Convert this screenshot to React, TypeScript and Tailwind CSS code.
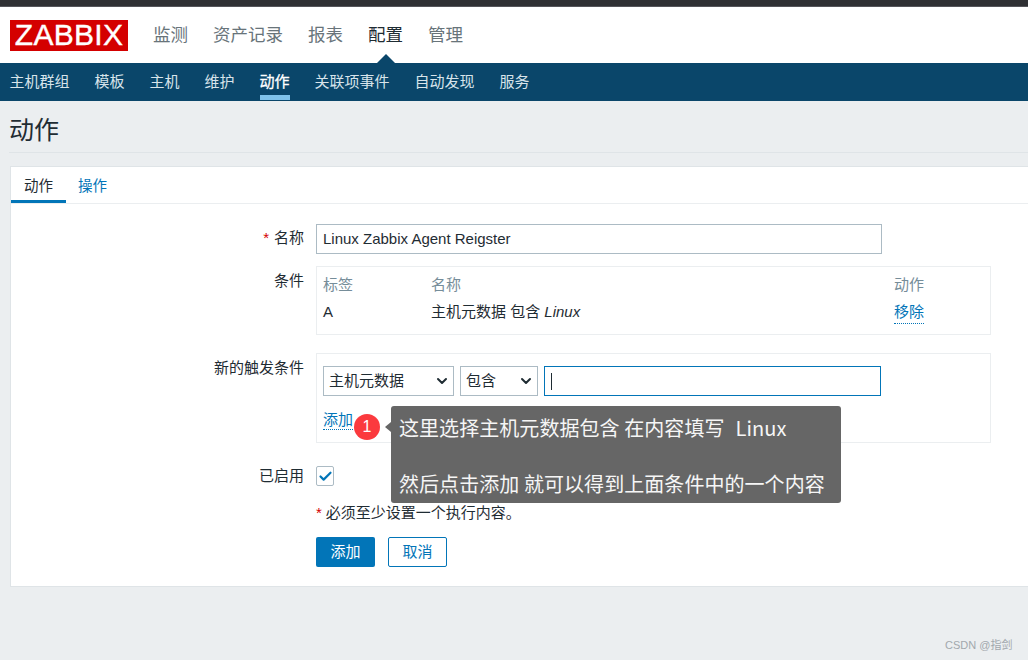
import type { ReactNode } from "react";
import { Check, ChevronDown } from "lucide-react";

const FONT = "font-['Liberation_Sans','Noto_Sans_CJK_SC',sans-serif]";

const mainMenu = [
  { label: "监测", active: false },
  { label: "资产记录", active: false },
  { label: "报表", active: false },
  { label: "配置", active: true },
  { label: "管理", active: false },
];

const subMenu = ["主机群组", "模板", "主机", "维护", "动作", "关联项事件", "自动发现", "服务"];

function Header() {
  return (
    <header className="flex h-[56px] items-center bg-white pl-[10px]">
      <div className="flex h-[31px] w-[118px] items-center justify-center bg-[#d40000] text-[30px] leading-none tracking-[0.3px] text-white [-webkit-text-stroke:0.4px_white]">
        ZABBIX
      </div>
      <nav className="ml-[25px] flex gap-[25px] pt-[1px] text-[17.5px]">
        {mainMenu.map((item) => (
          <a key={item.label} className={item.active ? "relative text-[#1f2c33]" : "text-[#68747a]"}>
            {item.label}
            {item.active && (
              <span className="absolute left-1/2 top-[32px] h-0 w-0 -translate-x-1/2 border-x-[9px] border-b-[9px] border-x-transparent border-b-[#0a466a]" />
            )}
          </a>
        ))}
      </nav>
    </header>
  );
}

function SubNav() {
  return (
    <nav className="flex h-[38px] gap-[25px] bg-[#0a466a] pl-[9.5px] text-[15px] text-[#d8e4eb]">
      {subMenu.map((item) => (
        <a
          key={item}
          className={
            item === "动作"
              ? "flex h-[37px] items-center border-b-[5px] border-[#7fc2ea] pt-[7px] text-white [-webkit-text-stroke:0.3px_white]"
              : "flex h-[37px] items-center pt-[2px]"
          }
        >
          {item}
        </a>
      ))}
    </nav>
  );
}

interface FormRowProps {
  label: string;
  required?: boolean;
  children: ReactNode;
  className?: string;
  labelClass?: string;
}

function FormRow({ label, required, children, className, labelClass }: FormRowProps) {
  return (
    <div className={`flex ${className ?? ""}`}>
      <label className={`w-[293px] shrink-0 text-right leading-[28px] ${labelClass ?? ""}`}>
        {required && <span className="mr-[5px] text-[#d40000]">*</span>}
        {label}
      </label>
      <div className="ml-[12px] min-w-0 flex-1">{children}</div>
    </div>
  );
}

function FakeSelect({ value, width }: { value: string; width: string }) {
  return (
    <div className={`flex h-[30px] items-center justify-between border border-[#acbbc4] pl-[5px] pr-[3px] ${width}`}>
      <span>{value}</span>
      <ChevronDown size={16} strokeWidth={3} className="text-[#1f2c33]" />
    </div>
  );
}

export default function App() {
  return (
    <div className={`${FONT} flex h-[660px] w-[1028px] flex-col overflow-hidden bg-[#ebeef0] text-[15px] text-[#1f2c33]`}>
      <div className="h-[7px] border-b border-[#55555a] bg-[#2f3033]" />
      <Header />
      <SubNav />

      <div className="mb-[13px] ml-[9px] flex h-[52px] items-center border-b border-[#dfe4e7] pt-[9px] text-[25px] text-[#1f2c33]">
        <h1>动作</h1>
      </div>

      <section className="relative ml-[10px] h-[421px] w-[1030px] border border-[#dfe4e7] bg-white">
        <div className="flex h-[37px] border-b border-[#ebeef0] text-[14.5px]">
          <div className="flex w-[55px] items-center justify-center border-b-[3px] border-[#0275b8] pt-[7px]">动作</div>
          <div className="ml-[12px] flex items-center pt-[4px] text-[#0275b8]">操作</div>
        </div>

        <div className="pt-[20px]">
          <FormRow label="名称" required>
            <div className="flex h-[30px] w-[566px] items-center border border-[#acbbc4] px-[6px]">
              Linux Zabbix Agent Reigster
            </div>
          </FormRow>

          <FormRow label="条件" className="mt-[12px]" labelClass="pt-[1px]">
            <div className="h-[69px] w-[675px] border border-[#ebeef0] px-[6px] pt-[6px]">
              <div className="flex h-[25px] items-center text-[#768d99]">
                <span className="w-[108px]">标签</span>
                <span className="w-[463px]">名称</span>
                <span>动作</span>
              </div>
              <div className="mt-[1px] flex h-[27px] items-center">
                <span className="w-[108px]">A</span>
                <span className="w-[463px]">
                  主机元数据 包含 <em>Linux</em>
                </span>
                <a className="border-b border-dotted border-[#0275b8] text-[#0275b8]">移除</a>
              </div>
            </div>
          </FormRow>

          <FormRow label="新的触发条件" className="mt-[18px]" labelClass="pt-[1px]">
            <div className="h-[90px] w-[675px] border border-[#ebeef0] px-[6px] pt-[12px]">
              <div className="flex gap-[6px]">
                <FakeSelect value="主机元数据" width="w-[131px]" />
                <FakeSelect value="包含" width="w-[78px]" />
                <div className="flex h-[30px] w-[337px] items-center border border-[#0275b8] pl-[6px]">
                  <span className="h-[17px] w-px bg-[#1f2c33]" />
                </div>
              </div>
              <a className="mt-[15px] inline-block border-b border-dotted border-[#0275b8] leading-[18px] text-[#0275b8]">添加</a>
            </div>
          </FormRow>

          <FormRow label="已启用" className="mt-[19px]">
            <div className="mt-[4px] flex h-[20px] w-[18px] items-center justify-center rounded-[2px] border border-[#acbbc4]">
              <Check size={15} strokeWidth={3.5} className="text-[#0275b8]" />
            </div>
          </FormRow>

          <div className="ml-[305px] mt-[13px] leading-[20px]">
            <span className="mr-[4px] text-[#d40000]">*</span>必须至少设置一个执行内容。
          </div>

          <div className="ml-[305px] mt-[14px] flex gap-[13px]">
            <button className="h-[30px] w-[59px] rounded-[2px] bg-[#0275b8] text-white">添加</button>
            <button className="h-[30px] w-[59px] rounded-[2px] border border-[#0275b8] text-[#0275b8]">取消</button>
          </div>
        </div>
      </section>

      {/* step marker and its callout, floating over the form */}
      <span className="absolute left-[354px] top-[414px] flex h-[26px] w-[26px] items-center justify-center rounded-full bg-[#fb3a3e] text-[16px] text-white">
        1
      </span>
      <div className="absolute left-[391px] top-[406px] h-[97px] w-[450px] rounded-[3px] bg-[#666666] px-[8px] font-['Noto_Sans_CJK_SC',sans-serif] text-[20px] leading-[28px] tracking-[0.06px] text-[#f6f6f6]">
        <span className="absolute -left-[6px] top-[16px] h-0 w-0 border-y-[5px] border-r-[6px] border-y-transparent border-r-[#666666]" />
        <p className="mt-[8px] whitespace-pre">
          这里选择主机元数据包含 在内容填写  <span className="ml-[2px]">Linux</span>
        </p>
        <p className="mt-[28px]">然后点击添加 就可以得到上面条件中的一个内容</p>
      </div>

      <span className="absolute left-[945px] top-[637px] text-[11px] text-[#a2a8ad]">CSDN @指剑</span>
    </div>
  );
}
